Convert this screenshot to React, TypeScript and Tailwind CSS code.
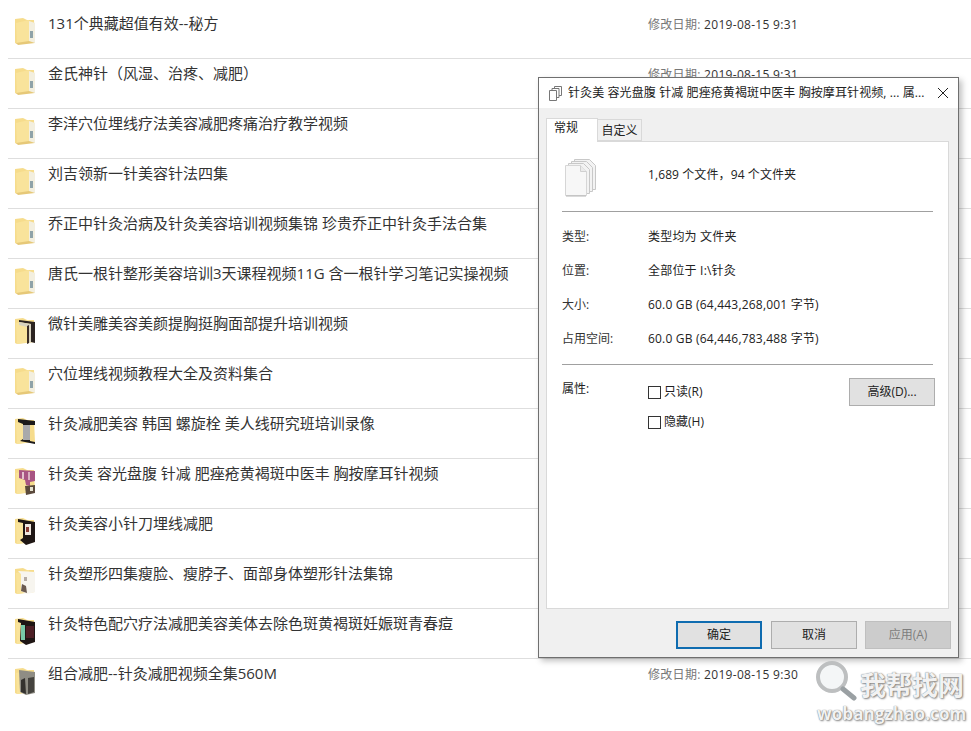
import React from "react";

type Kind = "plain" | "door" | "dark" | "pink" | "red" | "white" | "teal" | "gray";

function FolderIcon({ kind }: { kind: Kind }) {
  return (
    <svg width="22" height="28" viewBox="0 0 22 28" className="shrink-0">
      <path d="M1 2 L9 1 L13 3 L20 3 L21 25 L3 27 L1 26 Z" fill="#f6dc8c" />
      <path d="M2 6 L15 3 L15 25 L3 27 Z" fill="#f9e39b" />
      {kind === "plain" && (
        <>
          <path d="M15 4 L21 6 L21 26 L15 25 Z" fill="#f3efdf" />
          <rect x="16" y="14" width="3" height="7" fill="#8fa3a8" />
          <path d="M2 26 L15 24 L21 26 L4 28 Z" fill="#e6c878" />
        </>
      )}
      {kind === "door" && (
        <>
          <path d="M5 3 L21 5 L21 26 L17 25 L17 7 L5 5 Z" fill="#2b2320" />
          <path d="M5 5 L17 7 L17 25 L13 27 L13 10 L5 8 Z" fill="#d8d3c0" />
          <path d="M13 9 L15 8 L15 26 L13 27 Z" fill="#3a2c26" />
        </>
      )}
      {kind === "dark" && (
        <>
          <path d="M4 2 L21 4 L21 8 L16 8 L16 24 L21 25 L21 27 L6 24 L9 22 L9 7 L4 5 Z" fill="#1c1a1a" />
          <rect x="9" y="8" width="7" height="15" fill="#a9a9ab" />
        </>
      )}
      {kind === "pink" && (
        <>
          <path d="M5 3 L21 4 L21 14 L16 15 L16 19 L12 18 L11 13 L5 11 Z" fill="#a85583" />
          <rect x="8" y="5" width="2" height="7" fill="#e4c3cd" />
          <rect x="14" y="5" width="2" height="8" fill="#d9b0c0" />
          <path d="M11 19 L21 18 L21 26 L12 28 Z" fill="#5b4a3c" />
          <rect x="16" y="20" width="3" height="4" fill="#e6e2d0" />
        </>
      )}
      {kind === "red" && (
        <>
          <path d="M4 2 L21 5 L21 25 L12 28 L6 23 L9 21 L9 6 L4 5 Z" fill="#1e1614" />
          <rect x="11" y="7" width="6" height="11" fill="#efe7df" />
          <rect x="12" y="10" width="3" height="5" fill="#8a3b32" />
        </>
      )}
      {kind === "white" && (
        <>
          <path d="M4 4 L21 5 L21 25 L13 27 L7 24 L7 7 Z" fill="#f7f5ef" />
          <path d="M8 17 L12 19 L13 26 L7 24 Z" fill="#6a5a50" />
          <rect x="10" y="10" width="3" height="4" fill="#b5aca5" />
        </>
      )}
      {kind === "teal" && (
        <>
          <path d="M4 2 L21 5 L21 25 L12 28 L6 24 L7 6 L4 5 Z" fill="#1e1514" />
          <rect x="7" y="8" width="4" height="15" fill="#78c9a8" />
          <rect x="12" y="9" width="8" height="12" fill="#4d1f26" />
        </>
      )}
      {kind === "gray" && (
        <>
          <path d="M5 3 L21 5 L21 26 L12 28 L6 25 Z" fill="#8f8d84" />
          <path d="M7 13 L11 11 L12 27 L7 25 Z" fill="#34322e" />
          <path d="M14 11 L20 10 L20 25 L14 27 Z" fill="#45433e" />
        </>
      )}
    </svg>
  );
}

const rows: { name: string; kind: Kind; date?: string }[] = [
  { name: "131个典藏超值有效--秘方", kind: "plain", date: "2019-08-15 9:31" },
  { name: "金氏神针（风湿、治疼、减肥）", kind: "plain", date: "2019-08-15 9:31" },
  { name: "李洋穴位埋线疗法美容减肥疼痛治疗教学视频", kind: "plain" },
  { name: "刘吉领新一针美容针法四集", kind: "plain" },
  { name: "乔正中针灸治病及针灸美容培训视频集锦 珍贵乔正中针灸手法合集", kind: "plain" },
  { name: "唐氏一根针整形美容培训3天课程视频11G 含一根针学习笔记实操视频", kind: "plain" },
  { name: "微针美雕美容美颜提胸挺胸面部提升培训视频", kind: "door" },
  { name: "穴位埋线视频教程大全及资料集合", kind: "plain" },
  { name: "针灸减肥美容 韩国 螺旋栓 美人线研究班培训录像", kind: "dark" },
  { name: "针灸美 容光盘腹 针减 肥痤疮黄褐斑中医丰 胸按摩耳针视频", kind: "pink" },
  { name: "针灸美容小针刀埋线减肥", kind: "red" },
  { name: "针灸塑形四集瘦脸、瘦脖子、面部身体塑形针法集锦", kind: "white" },
  { name: "针灸特色配穴疗法减肥美容美体去除色斑黄褐斑妊娠斑青春痘", kind: "teal" },
  { name: "组合减肥--针灸减肥视频全集560M", kind: "gray", date: "2019-08-15 9:30" },
];

function Row({ name, kind, date, last }: { name: string; kind: Kind; date?: string; last: boolean }) {
  return (
    <div className={`flex h-[50px] items-start ${last ? "" : "border-b border-[#dedede]"}`}>
      <div className="ml-[6px] mt-[8px] w-[34px]">
        <FolderIcon kind={kind} />
      </div>
      <div className="mt-[3px] w-[600px] truncate text-[15px] leading-[22px] text-[#333333]">{name}</div>
      {date && (
        <div className="mt-[7px] text-[12px] leading-[18px] tracking-[0.3px] text-[#333333]">
          <span className="text-[#777777]">修改日期: </span>
          {date}
        </div>
      )}
    </div>
  );
}

function Field({ label, value }: { label: string; value: string }) {
  return (
    <div className="flex h-[34px] items-center">
      <span className="w-[86px] text-[#333333]">{label}</span>
      <span className="tracking-[0.2px]">{value}</span>
    </div>
  );
}

function Check({ label }: { label: string }) {
  return (
    <div className="flex items-center gap-[3px]">
      <span className="h-[13px] w-[13px] border border-[#333333] bg-white" />
      <span>{label}</span>
    </div>
  );
}

function StackIcon() {
  const page = "M0 0 H15 L21 6 V30 H0 Z";
  return (
    <svg width="32" height="38" viewBox="0 0 32 38">
      <g stroke="#c8c8c8" strokeWidth="1" fill="#f3f3f3">
        <path d={page} transform="translate(9.5 0.5)" />
        <path d={page} transform="translate(6.5 2.5)" />
        <path d={page} transform="translate(3.5 4.5)" />
        <path d={page} transform="translate(0.5 6.5)" fill="#f7f7f7" stroke="#d6d6d6" />
        <path d="M15.5 6.5 V12.5 H21.5" fill="#ebebeb" stroke="#d0d0d0" />
      </g>
      <path d="M1 37 H21" stroke="#b5b5b5" strokeWidth="1" />
    </svg>
  );
}

function Dialog() {
  return (
    <div className="absolute left-[538px] top-[77px] flex h-[581px] w-[421px] flex-col border border-[#6f6f6f] bg-[#f0f0f0] text-[12px] text-[#222222] shadow-[3px_3px_6px_rgba(0,0,0,0.25)]">
      <div className="flex h-[30px] items-center bg-white pl-[10px] pr-[8px]">
        <svg width="13" height="15" viewBox="0 0 13 15" fill="#fff" stroke="#777" strokeWidth="1" className="mr-[6px] shrink-0">
          <path d="M5.5 0.5 H12.5 V9.5 H5.5 Z" />
          <path d="M3 2.5 H10 V11.5 H3 Z" />
          <path d="M0.5 4.5 H7.5 V14.5 H0.5 Z" />
        </svg>
        <span className="flex-1 truncate tracking-[0.1px]">针灸美 容光盘腹 针减 肥痤疮黄褐斑中医丰 胸按摩耳针视频, ... 属...</span>
        <svg width="12" height="12" viewBox="0 0 12 12" stroke="#222" strokeWidth="1" className="ml-[10px] mr-[1px] shrink-0">
          <path d="M1 1 L11 11 M11 1 L1 11" />
        </svg>
      </div>
      <div className="relative flex flex-1 flex-col pb-[7px] pl-[7px] pr-[9px] pt-[10px]">
        <div className="relative z-10 flex h-[23px] items-end">
          <div className="-mb-px flex h-[24px] w-[52px] items-start border border-b-0 border-[#d9d9d9] bg-white pl-[7px]">常规</div>
          <div className="flex h-[22px] w-[44px] items-center justify-center border border-l-0 border-[#d9d9d9] bg-[#f0f0f0] pt-[1px]">自定义</div>
        </div>
        <div className="flex flex-1 flex-col border border-[#d9d9d9] bg-white px-[15px]">
          <div className="flex h-[69px] items-center">
            <div className="ml-[3px] w-[83px] pt-[2px]">
              <StackIcon />
            </div>
            <span className="mb-[4px] tracking-[0.1px]">1,689 个文件，94 个文件夹</span>
          </div>
          <div className="border-t border-[#a0a0a0]" />
          <div className="pt-[8px]">
            <Field label="类型:" value="类型均为 文件夹" />
            <Field label="位置:" value="全部位于 I:\针灸" />
            <Field label="大小:" value="60.0 GB (64,443,268,001 字节)" />
            <Field label="占用空间:" value="60.0 GB (64,446,783,488 字节)" />
          </div>
          <div className="mt-[8px] border-t border-[#a0a0a0]" />
          <div className="flex pt-[13px]">
            <span className="w-[86px] pt-[2px]">属性:</span>
            <div className="flex flex-col gap-[12px] pt-[5px]">
              <Check label="只读(R)" />
              <Check label="隐藏(H)" />
            </div>
            <button className="ml-auto mr-[-2px] h-[28px] w-[86px] border border-[#adadad] bg-[#e1e1e1]">高级(D)...</button>
          </div>
        </div>
        <div className="-mr-[2px] flex h-[41px] items-end justify-end gap-[8px] pb-[1px]">
          <button className="mr-[1px] h-[28px] w-[86px] border-2 border-[#0f6cb0] bg-[#e1e1e1]">确定</button>
          <button className="h-[28px] w-[86px] border border-[#adadad] bg-[#e1e1e1]">取消</button>
          <button className="h-[28px] w-[86px] border border-[#bfbfbf] bg-[#cccccc] text-[#7d7d7d]">应用(A)</button>
        </div>
      </div>
    </div>
  );
}

function Watermark() {
  return (
    <div className="absolute left-[815px] top-[660px] flex h-[70px] w-[156px] flex-col">
      <div className="flex h-[44px] items-start">
        <svg width="42" height="44" viewBox="0 0 42 44" className="shrink-0">
          <circle cx="17" cy="17" r="14" fill="#f4f6f7" stroke="#bdbfc0" strokeWidth="4" />
          <path d="M28 29 L39 38" stroke="#9aa0a3" strokeWidth="5" strokeLinecap="round" />
        </svg>
        <span className="ml-[3px] mt-[8px] text-[26px] font-bold leading-[34px] text-[#f2f2f2] [text-shadow:0_0_1px_#666,1px_1px_2px_#888]">
          我帮找网
        </span>
      </div>
      <span className="ml-[2px] text-[17px] font-bold leading-[20px] tracking-[0.1px] text-[#f2f2f2] [text-shadow:0_0_1px_#666,1px_1px_2px_#888]">
        wobangzhao.com
      </span>
    </div>
  );
}

export default function App() {
  return (
    <div className="relative h-[731px] w-[971px] overflow-hidden bg-white font-['Open_Sans','Noto_Sans_CJK_SC',sans-serif]">
      <div className="ml-[8px] pt-[9px]">
        {rows.map((r, i) => (
          <Row key={r.name} {...r} last={i === rows.length - 1} />
        ))}
      </div>
      <Dialog />
      <Watermark />
    </div>
  );
}
